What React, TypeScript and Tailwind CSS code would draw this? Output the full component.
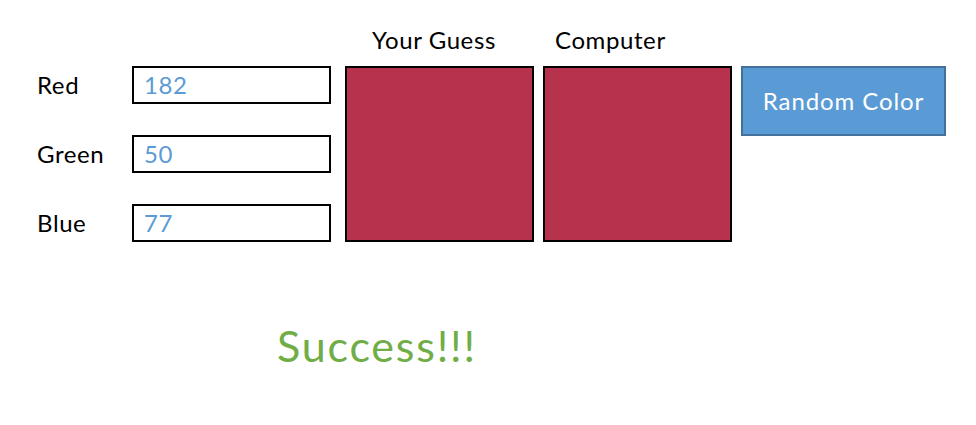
import React from 'react';

const font = { fontFamily: 'Lato, "Open Sans", sans-serif' };

const channels = [
  { label: 'Red', value: '182' },
  { label: 'Green', value: '50' },
  { label: 'Blue', value: '77' },
];

function Swatch({ title, pad }: { title: string; pad: string }) {
  return (
    <div className="flex flex-col">
      <div className={`h-[32px] text-[24px] leading-[32px] tracking-[0.6px] text-black mb-[10px] ${pad}`}>{title}</div>
      <div className="w-[189px] h-[176px] border-2 border-black bg-[#b6324d]" />
    </div>
  );
}

export default function App() {
  return (
    <div className="w-[976px] h-[425px] bg-white" style={font}>
      <div className="flex items-start pt-[24px] pl-[37px]">
        <div className="flex flex-col gap-[31px] pt-[42px]">
          {channels.map((c) => (
            <div key={c.label} className="flex items-center h-[38px]">
              <span className="w-[95px] text-[24px] leading-[38px] tracking-[0.6px] text-black">{c.label}</span>
              <div className="w-[199px] h-[38px] border-2 border-black pl-[10px] text-[24px] leading-[34px] tracking-[0.6px] text-[#5b9bd5]">
                {c.value}
              </div>
            </div>
          ))}
        </div>
        <div className="flex gap-[9px] ml-[14px]">
          <Swatch title="Your Guess" pad="pl-[27px]" />
          <Swatch title="Computer" pad="pl-[12px]" />
          <div className="pt-[42px]">
            <button className="w-[205px] h-[70px] bg-[#5b9bd5] border-2 border-[#41719c] text-white text-[24px] leading-none tracking-[0.9px]">
              Random Color
            </button>
          </div>
        </div>
      </div>
      <div className="mt-[78px] pl-[277px] text-[43px] leading-[52px] tracking-[1.8px] text-[#70ad47]">Success!!!</div>
    </div>
  );
}
